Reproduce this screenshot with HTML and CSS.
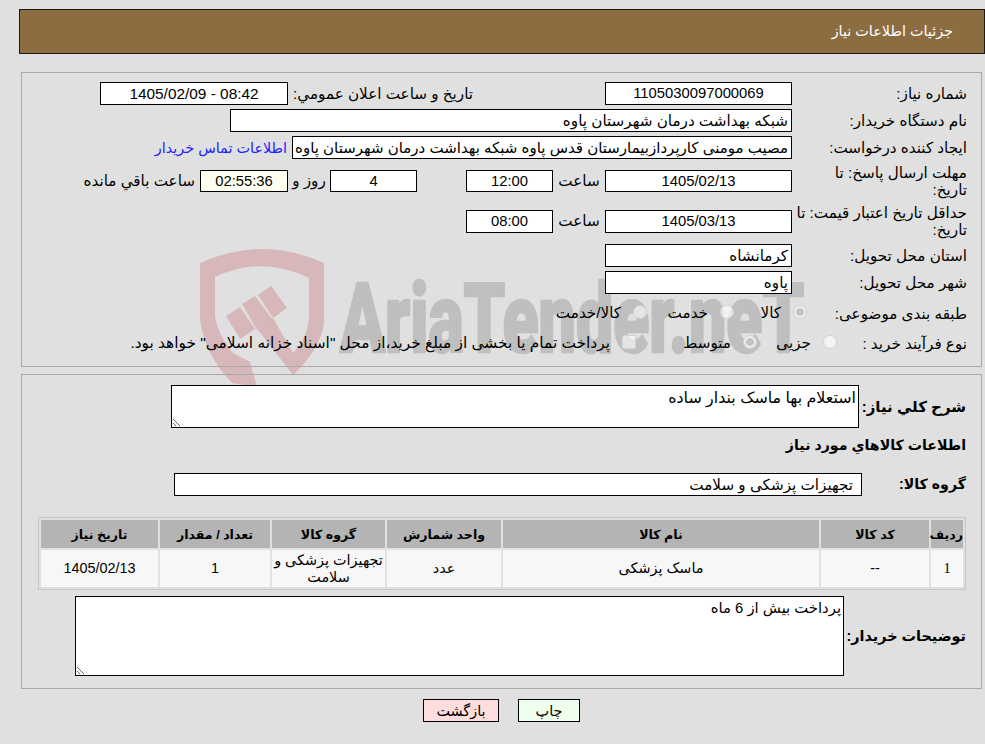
FILE: index.html
```html
<!DOCTYPE html>
<html lang="fa" dir="rtl">
<head>
<meta charset="utf-8">
<title>جزئیات اطلاعات نیاز</title>
<link rel="stylesheet" href="styles.css">
</head>
<body>
<svg class="watermark" width="620" height="150" viewBox="190 240 620 150" aria-hidden="true">
  <path class="wm-red" fill-rule="evenodd" d="M200 263Q262 235 324 263L324 323Q320 350 293 375L258 330L273 318L293 353Q306 340 309 320L309 278Q262 255 215 277L215 317Q218 335 233 353L250 362L257 387L232 383Q205 355 200 320Z"/>
  <path class="wm-red" d="M226 316L240 307L255 329L240 339Z"/>
  <path class="wm-red" d="M242 304L255 296L273 320L257 330Z"/>
  <path class="wm-red" d="M258 295L271 286L287 308L273 318Z"/>
  <text class="wm-text" transform="translate(340 352) scale(.69 1)" direction="ltr">AriaTender.neT</text>
</svg>

<header class="title-bar">جزئیات اطلاعات نیاز</header>

<section class="panel panel-info">
  <div class="row r-std">
    <div class="label">شماره نیاز:</div>
    <div class="field w187 center num">1105030097000069</div>
    <div class="label-announce">تاریخ و ساعت اعلان عمومي:</div>
    <div class="field w188 center num wide ltr">1405/02/09 - 08:42</div>
  </div>
  <div class="row r-std">
    <div class="label">نام دستگاه خریدار:</div>
    <div class="field w562">شبکه بهداشت درمان شهرستان پاوه</div>
  </div>
  <div class="row r-std">
    <div class="label">ایجاد کننده درخواست:</div>
    <div class="field w500 snug">مصیب مومنی کارپردازبیمارستان قدس پاوه شبکه بهداشت درمان شهرستان پاوه</div>
    <a class="contact" href="#">اطلاعات تماس خریدار</a>
  </div>
  <div class="row r-tall">
    <div class="label">مهلت ارسال پاسخ: تا<br>تاریخ:</div>
    <div class="field f22 w187 center num">1405/02/13</div>
    <div class="unit w52">ساعت</div>
    <div class="field f22 w87 center num">12:00</div>
    <div class="spacer49"></div>
    <div class="field f22 w87 center num">4</div>
    <div class="unit w42">روز و</div>
    <div class="field f22 w88 center num timer">02:55:36</div>
    <div class="remain">ساعت باقي مانده</div>
  </div>
  <div class="row r-tall">
    <div class="label">حداقل تاریخ اعتبار قیمت: تا<br>تاریخ:</div>
    <div class="field w187 center num">1405/03/13</div>
    <div class="unit w52">ساعت</div>
    <div class="field w87 center num">08:00</div>
  </div>
  <div class="row r-city1">
    <div class="label">استان محل تحویل:</div>
    <div class="field w187">کرمانشاه</div>
  </div>
  <div class="row r-std">
    <div class="label">شهر محل تحویل:</div>
    <div class="field w187">پاوه</div>
  </div>
  <div class="row r-radio1">
    <div class="label w160">طبقه بندی موضوعی:</div>
    <div class="opt w73"><input class="mark round" type="radio" name="cat" checked disabled><span>کالا</span></div>
    <div class="opt w87"><input class="mark round" type="radio" name="cat" disabled><span>خدمت</span></div>
    <div class="opt"><input class="mark round" type="radio" name="cat" disabled><span>کالا/خدمت</span></div>
  </div>
  <div class="row r-radio2">
    <div class="label w130">نوع فرآیند خرید :</div>
    <div class="opt w80"><input class="mark round" type="radio" name="proc" disabled><span>جزیی</span></div>
    <div class="opt w121"><input class="mark round" type="radio" name="proc" checked disabled><span>متوسط</span></div>
    <div class="opt long"><input class="mark square" type="checkbox" disabled><span>پرداخت تمام یا بخشی از مبلغ خرید،از محل "اسناد خزانه اسلامی" خواهد بود.</span></div>
  </div>
</section>

<section class="panel panel-goods">
  <div class="row r-summary">
    <div class="label strong w107">شرح كلي نياز:</div>
    <textarea class="area area-summary" readonly>استعلام بها ماسک بندار ساده</textarea>
  </div>
  <h2 class="goods-head">اطلاعات كالاهاي مورد نياز</h2>
  <div class="row r-group">
    <div class="label strong small w104">گروه کالا:</div>
    <div class="field w688 group-field">تجهیزات پزشکی و سلامت</div>
  </div>
  <table class="goods">
    <colgroup>
      <col class="c1"><col class="c2"><col class="c3"><col class="c4"><col class="c5"><col class="c6"><col class="c7">
    </colgroup>
    <thead>
      <tr><th>ردیف</th><th>کد کالا</th><th>نام کالا</th><th>واحد شمارش</th><th>گروه کالا</th><th>تعداد / مقدار</th><th>تاریخ نیاز</th></tr>
    </thead>
    <tbody>
      <tr><td class="serif">1</td><td>--</td><td>ماسک پزشکی</td><td>عدد</td><td>تجهیزات پزشکی و سلامت</td><td>1</td><td>1405/02/13</td></tr>
    </tbody>
  </table>
  <div class="row r-notes">
    <div class="label strong tight w122">توضیحات خریدار:</div>
    <textarea class="area area-notes" readonly>پرداخت بیش از 6 ماه</textarea>
  </div>
</section>

<div class="actions">
  <button class="btn btn-print" type="button">چاپ</button>
  <button class="btn btn-back" type="button">بازگشت</button>
</div>
</body>
</html>
```
FILE: styles.css
```css
html, body { margin: 0; padding: 0; }
html { background: #e0e0e0; }
body {
  position: relative;
  width: 985px;
  height: 744px;
  overflow: hidden;
  font-family: "Liberation Sans", "DejaVu Sans", sans-serif;
  font-size: 15.2px;
  color: #000;
}
.watermark { position: absolute; left: 190px; top: 240px; z-index: -1; }
.wm-red { fill: #d7b7b9; }
.wm-text { font-family: "Roboto", sans-serif; font-weight: 900; font-size: 96px; fill: #bfbfbf; stroke: #bfbfbf; stroke-width: 2.5px; stroke-linejoin: round; }

.title-bar {
  box-sizing: border-box;
  height: 45px;
  margin: 9px 0 0 19px;
  padding: 0 31px 2px 0;
  display: flex;
  align-items: center;
  background: #8c6d42;
  border: 1px solid #1f1a10;
  color: #fff;
  font-size: 14.4px;
}
.panel {
  box-sizing: border-box;
  margin: 0 3px 0 0;
  margin-left: 21px;
  border: 1px solid #a8a8a8;
}
.panel-info { margin-top: 18px; height: 295px; padding: 9px 14px 0 0; display: flex; flex-direction: column; gap: 4px; }
.panel-goods { margin-top: 7px; height: 315px; padding: 10px 15px 0 0; }

.row { display: flex; align-items: center; }
.r-std { height: 23px; }
.r-tall { height: 36px; }
.r-city1 { height: 23px; margin-top: 1px; }
.r-radio1 { height: 30px; }
.r-radio2 { height: 22px; }

.label { box-sizing: border-box; width: 175px; flex: none; line-height: 17px; white-space: nowrap; }
.label.w160 { width: 160px; }
.label.w130 { width: 130px; }
.label.w107 { width: 107px; }
.label.w104 { width: 104px; }
.label.w122 { width: 122px; }
.strong { font-weight: 700; font-size: 15px; }
.small { font-size: 14.2px; }
.tight { font-size: 14.4px; }

.field {
  box-sizing: border-box;
  height: 23px;
  flex: none;
  border: 1px solid #000;
  background: #fff;
  padding: 0 3px;
  line-height: 21px;
  white-space: nowrap;
  overflow: hidden;
}
.f22 { height: 22px; line-height: 20px; }
.center { text-align: center; }
.num { font-size: 14.8px; }
.num.wide { font-size: 15.4px; }
.ltr { direction: ltr; }
.snug { font-size: 15px; }
.timer { background: #fffff0; }
.w187 { width: 187px; }
.w188 { width: 188px; }
.w562 { width: 562px; }
.w500 { width: 500px; }
.w87 { width: 87px; }
.w88 { width: 88px; }
.w688 { width: 688px; }
.w52 { width: 52px; text-align: center; flex: none; }
.w42 { width: 42px; text-align: center; flex: none; }
.spacer49 { width: 49px; flex: none; }
.label-announce { width: 317px; box-sizing: border-box; padding-right: 132px; flex: none; white-space: nowrap; }
.contact { margin-right: 5px; color: #2222ff; text-decoration: none; white-space: nowrap; font-size: 14.4px; }
.remain { margin-right: 5px; white-space: nowrap; }

.opt { display: flex; align-items: center; gap: 12px; flex: none; white-space: nowrap; }
.opt.w73 { width: 73px; }
.opt.w87 { width: 87px; }
.opt.w80 { width: 80px; }
.opt.w121 { width: 121px; }
.opt.long { font-size: 15.4px; }
.mark {
  appearance: none;
  box-sizing: border-box;
  width: 14px;
  height: 14px;
  margin: 0 0 3px;
  flex: none;
  border: 1px solid #d2d2d2;
  background: rgba(255, 255, 255, .6);
}
.round { border-radius: 50%; }
.square { border-radius: 2px; }
.round:checked { background: radial-gradient(circle, #c2c2c2 0 3.5px, #ececec 4px); }

.area {
  box-sizing: border-box;
  display: block;
  flex: none;
  margin: 0;
  padding: 2px;
  border: 1px solid #000;
  border-radius: 0;
  outline: none;
  background: #fff;
  font: inherit;
  color: #000;
  direction: rtl;
}
.area-summary { width: 688px; height: 43px; font-size: 15.9px; }
.area-notes { width: 769px; height: 80px; font-size: 14.8px; }
.r-summary { height: 43px; }
.goods-head { margin: 5px 0 0; height: 24px; line-height: 24px; font-size: 14.2px; font-weight: 700; }
.r-group { margin-top: 16px; height: 23px; }
.group-field { padding-right: 8px; }
.r-notes { margin-top: 6px; height: 80px; }

.goods {
  box-sizing: border-box;
  width: 928px;
  margin: 21px 0 0;
  table-layout: fixed;
  border-collapse: separate;
  border-spacing: 2px;
  border: 1px solid #c6c6c6;
  font-size: 14.4px;
}
.goods th, .goods td { padding: 0; text-align: center; }
.goods th { height: 28px; background: #b4b4b4; font-size: 12.6px; }
.goods td { height: 37px; background: #f7f7f7; line-height: 17px; }
.goods .serif { font-family: "Liberation Serif", serif; }
.c1 { width: 32px; }
.c2 { width: 108px; }
.c3 { width: 316px; }
.c4 { width: 114px; }
.c5 { width: 113px; }
.c6 { width: 110px; }
.c7 { width: 117px; }

.actions { display: flex; gap: 19px; margin-top: 10px; padding-right: 405px; font-size: 14.4px; }
.btn {
  box-sizing: border-box;
  height: 23px;
  padding: 0;
  border: 1px solid #000;
  font: inherit;
  color: #000;
}
.btn-print { width: 62px; background: #eeffee; }
.btn-back { width: 76px; background: #ffdddd; }
```
